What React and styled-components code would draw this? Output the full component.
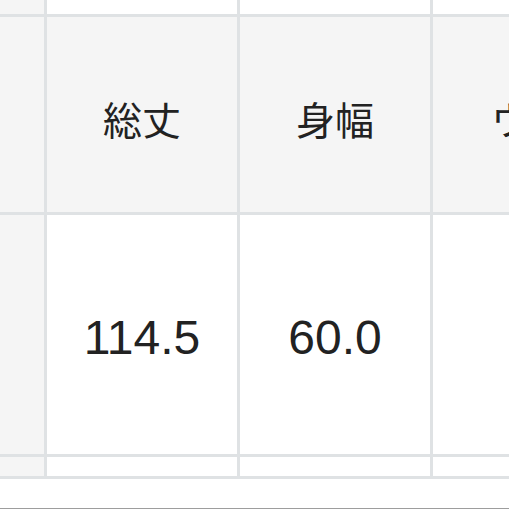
import React from "react";
import styled, { createGlobalStyle } from "styled-components";

const Global = createGlobalStyle`
  html, body { margin: 0; padding: 0; background: #ffffff; overflow: hidden; }
  body { width: 509px; height: 509px; }
`;

const Page = styled.div`
  width: 509px;
  height: 509px;
  overflow: hidden;
  background: #ffffff;
`;

const Grid = styled.div`
  display: grid;
  grid-template-columns: 44px 190px 190px 272px;
  grid-template-rows: 14px 195px 239px 19px;
  gap: 3px;
  width: max-content;
  background: #dfe2e4;
  border-bottom: 3px solid #dfe2e4;
`;

const Cell = styled.div`
  background: ${(p) => (p.$head ? "#f5f5f5" : "#ffffff")};
  display: flex;
  align-items: center;
  justify-content: center;
  padding-top: ${(p) => p.$shift || 0}px;
  color: #222222;
  font-family: ${(p) =>
    p.$num
      ? '"Liberation Sans", Arial, sans-serif'
      : '"Noto Sans CJK JP", "Noto Sans", sans-serif'};
  font-size: ${(p) => (p.$num ? "48px" : "39px")};
  white-space: nowrap;
  overflow: hidden;
`;

const Footer = styled.div`
  height: 29px;
  border-bottom: 1px solid #9d9d9d;
`;

const headers = ["総丈", "身幅", "ウエスト"];
const values = ["114.5", "60.0", "48.0"];

export default function App() {
  return (
    <Page>
      <Global />
      <Grid>
        <Cell $head />
        <Cell />
        <Cell />
        <Cell />

        <Cell $head />
        {headers.map((h) => (
          <Cell key={h} $head $shift={6}>
            {h}
          </Cell>
        ))}

        <Cell $head />
        {values.map((v) => (
          <Cell key={v} $num $shift={6}>
            {v}
          </Cell>
        ))}

        <Cell $head />
        <Cell />
        <Cell />
        <Cell />
      </Grid>
      <Footer />
    </Page>
  );
}
